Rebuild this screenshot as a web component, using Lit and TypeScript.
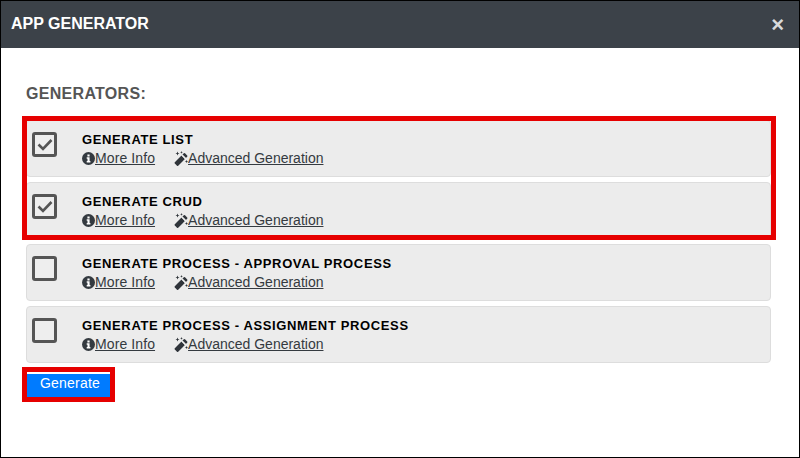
import { LitElement, html, css, svg } from "lit";
import { customElement } from "lit/decorators.js";

const wand = svg`<svg class="wand" viewBox="0 0 14 15" width="14" height="15" aria-hidden="true">
  <path d="M.800 11.300 7.500 4.600l3.400 3.400-6.700 6.700a.9.900 0 0 1-1.200 0L.800 12.500a.9.900 0 0 1 0-1.200Z" fill="#2f343a"/>
  <path d="M8.400 3.700 9.800 2.300a.9.900 0 0 1 1.200 0l2.200 2.200a.9.900 0 0 1 0 1.200L11.800 7.100Z" fill="#2f343a"/>
  <path d="M7.500 4.600 8.500 3.600l3.400 3.400-1 1Z" fill="#eee"/>
  <path d="M3.500.500l.6 1.400 1.400.6-1.400.6-.6 1.400-.6-1.400L1.500 2.500l1.400-.6ZM7.500 0l.4 1 1 .4-1 .4-.4 1-.4-1-1-.4 1-.4ZM12.500 9l.5 1.100 1 .4-1 .5-.5 1-.5-1-1-.5 1-.4Z" fill="#2f343a"/>
</svg>`;

const info = svg`<svg class="info" viewBox="0 0 13 13" width="13" height="13" aria-hidden="true">
  <circle cx="6.500" cy="6.500" r="6.500" fill="#343a40"/>
  <rect x="5.400" y="2.500" width="2.200" height="2" fill="#fff"/>
  <path d="M4.700 5.300h2.900v3.800h.8v1.400H4.700V9.100h.8V6.700h-.8Z" fill="#fff"/>
</svg>`;

@customElement("app-root")
export class AppRoot extends LitElement {
  static styles = css`
    :host {
      display: block;
      position: relative;
      width: 800px;
      height: 458px;
      box-sizing: border-box;
      border: 1px solid #000;
      background: #fff;
      font-family: "Liberation Sans", Arial, sans-serif;
      overflow: hidden;
    }
    .head {
      display: flex;
      align-items: center;
      justify-content: space-between;
      height: 47px;
      padding: 0 15px 2px 10px;
      box-sizing: border-box;
      background: #3c4249;
      color: #fff;
    }
    .title { font-size: 16px; font-weight: 700; }
    .close { font-size: 22px; font-weight: 700; color: #d8dadc; line-height: 1; margin-top: 3px; }
    .body { padding: 36px 0 0 25px; }
    .label {
      font-size: 16px;
      font-weight: 700;
      color: #555;
      letter-spacing: .3px;
      line-height: 18px;
      margin: 1px 0 17px;
    }
    .list { display: flex; flex-direction: column; gap: 5px; width: 745px; }
    .card {
      display: flex;
      box-sizing: border-box;
      height: 57px;
      padding: 11px 0 0 5px;
      background: #ececec;
      border: 1px solid #ddd;
      border-radius: 4px;
    }
    .box {
      box-sizing: border-box;
      width: 25px;
      height: 25px;
      border: 3px solid #555;
      border-radius: 3px;
      background: #eee;
      display: flex;
      align-items: center;
      justify-content: center;
      flex: none;
    }
    .text { margin-left: 25px; }
    .name { font-size: 13px; font-weight: 700; color: #000; letter-spacing: .63px; line-height: 15px; }
    .links { display: flex; gap: 19px; margin-top: 3px; font-size: 14px; line-height: 16px; color: #343a40; }
    .link { display: flex; align-items: center; }
    .link span { text-decoration: underline; }
    .more { letter-spacing: .1px; }
    .btn {
      display: block;
      margin: 11px 0 0 1px;
      width: 83px;
      height: 25px;
      padding: 0 0 8px 3px;
      border: 0;
      background: #007bff;
      color: #fff;
      font: 14px "Liberation Sans", Arial, sans-serif;
      letter-spacing: .2px;
    }
    .mark { position: absolute; border: 5px solid #e60000; box-sizing: border-box; pointer-events: none; }
    .mark.cards { left: 21px; top: 115px; width: 754px; height: 124px; }
    .mark.action { left: 21px; top: 366px; width: 93px; height: 35px; }
  `;

  private card(name: string, checked: boolean) {
    return html`<div class="card">
      <div class="box">
        ${checked
          ? svg`<svg viewBox="0 0 16 16" width="16" height="16" aria-hidden="true"><path d="M1.500 7.500 6 12 14.500 3" fill="none" stroke="#555" stroke-width="2.600"/></svg>`
          : ""}
      </div>
      <div class="text">
        <div class="name">${name}</div>
        <div class="links">
          <div class="link">${info}<span class="more">More Info</span></div>
          <div class="link">${wand}<span>Advanced Generation</span></div>
        </div>
      </div>
    </div>`;
  }

  render() {
    return html`
      <div class="head"><div class="title">APP GENERATOR</div><div class="close">×</div></div>
      <div class="body">
        <div class="label">GENERATORS:</div>
        <div class="list">
          ${this.card("GENERATE LIST", true)}
          ${this.card("GENERATE CRUD", true)}
          ${this.card("GENERATE PROCESS - APPROVAL PROCESS", false)}
          ${this.card("GENERATE PROCESS - ASSIGNMENT PROCESS", false)}
        </div>
        <button class="btn">Generate</button>
      </div>
      <div class="mark cards"></div>
      <div class="mark action"></div>
    `;
  }
}
